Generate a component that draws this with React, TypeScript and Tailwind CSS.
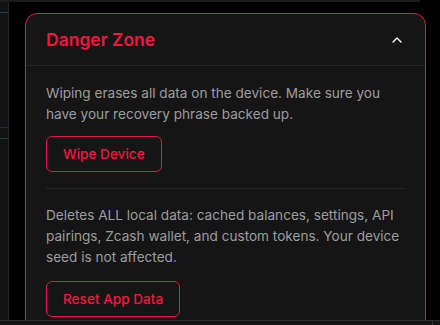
import React from "react";
import { ChevronUp } from "lucide-react";

export default function App() {
  return (
    <div
      className="relative w-[440px] h-[325px] overflow-hidden bg-black flex flex-col"
      style={{ fontFamily: "Inter, 'Noto Sans', sans-serif" }}
    >
      <div className="h-[2px] w-[420px] bg-[#1b1b1b] shrink-0" />
      <div className="flex flex-1 min-h-0">
        <div className="w-[9px] shrink-0 bg-[#121212] border-r border-[#242424] flex flex-col">
          <div className="h-[10px]" />
          <div className="h-px bg-[#1f3b5c]" />
          <div className="h-[114px]" />
          <div className="h-px bg-[#1d2a44]" />
          <div className="h-[10px]" />
          <div className="h-px bg-[#1e4a34]" />
        </div>
        <div className="flex-1 pl-[16px] pt-[11px]">
          <div className="w-[401px] rounded-xl border border-[#e8183f] bg-[#151515]">
            <div className="flex items-center justify-between px-5 pt-3 pb-[11px] border-b border-[#262626]">
              <h2 className="text-[17.5px] leading-7 font-semibold text-[#f5173f]">Danger Zone</h2>
              <ChevronUp size={16} strokeWidth={2} className="text-white" />
            </div>
            <div className="px-5 pt-[17px] pb-5">
              <p className="text-[13.6px] leading-[21px] text-[#9d9d9d]">
                Wiping erases all data on the device. Make sure you have your recovery phrase backed up.
              </p>
              <button className="mt-[11px] px-4 py-[7px] text-[13.6px] leading-5 font-medium text-[#f5173f] border border-[#e8183f] rounded-md">
                Wipe Device
              </button>
              <div className="mt-4 h-px bg-[#262626]" />
              <p className="mt-4 text-[13.6px] leading-[21px] text-[#9d9d9d]">
                Deletes ALL local data: cached balances, settings, API pairings, Zcash wallet, and custom tokens. Your device seed is not affected.
              </p>
              <button className="mt-[13px] px-4 py-[7px] text-[13.6px] leading-5 font-medium text-[#f5173f] border border-[#e8183f] rounded-md">
                Reset App Data
              </button>
            </div>
          </div>
        </div>
      </div>
      <div className="absolute left-0 right-0 bottom-0 h-[5px] bg-[#141414] border-t border-[#2c2c2c]">
        <div className="absolute left-[432px] top-0 w-px h-full bg-[#333]" />
      </div>
    </div>
  );
}
